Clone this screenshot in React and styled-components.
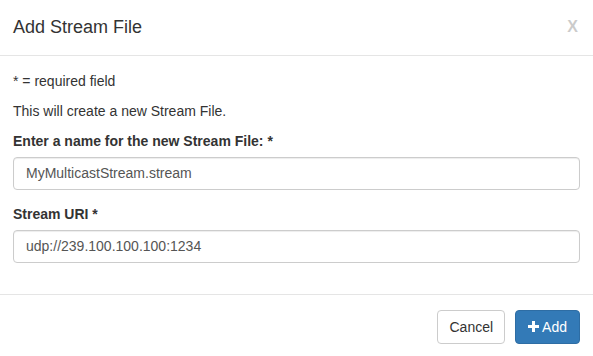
import styled, { createGlobalStyle } from 'styled-components';

const GlobalStyle = createGlobalStyle`
  html, body {
    margin: 0;
    background: #fff;
  }
  body {
    font-family: "Liberation Sans", Arial, sans-serif;
    font-size: 14px;
    line-height: 1.42857;
    color: #333;
  }
  * {
    box-sizing: border-box;
  }
`;

const Modal = styled.div`
  width: 593px;
  background: #fff;
`;

const Header = styled.div`
  display: flex;
  align-items: center;
  justify-content: space-between;
  padding: 15px 13px 14px;
  border-bottom: 1px solid #e5e5e5;
`;

const Title = styled.h4`
  margin: 0;
  font-size: 18px;
  font-weight: 400;
  line-height: 1.42857;
  color: #333;
`;

const Close = styled.button`
  border: 0;
  background: none;
  padding: 0;
  margin: 0 2px 2px 0;
  font-family: "Liberation Sans", Arial, sans-serif;
  font-size: 16px;
  font-weight: 700;
  line-height: 1;
  color: #000;
  opacity: 0.2;
  cursor: pointer;
`;

const Body = styled.div`
  padding: 16px 13px;
`;

const Text = styled.p`
  margin: 0 0 10px;
`;

const FormGroup = styled.div`
  margin-bottom: 15px;
`;

const Label = styled.label`
  display: block;
  margin-bottom: 5px;
  font-weight: 700;
`;

const Input = styled.input`
  display: block;
  width: 100%;
  height: 33px;
  padding: 6px 12px;
  font-family: inherit;
  font-size: 14px;
  color: #555;
  background: #fff;
  border: 1px solid #ccc;
  border-radius: 4px;
  box-shadow: inset 0 1px 1px rgba(0, 0, 0, 0.075);
`;

const Footer = styled.div`
  display: flex;
  justify-content: flex-end;
  gap: 10px;
  padding: 15px 13px;
  border-top: 1px solid #e5e5e5;
`;

const Button = styled.button`
  display: inline-flex;
  align-items: center;
  gap: 3px;
  height: 34px;
  padding: 6px ${(p) => (p.$primary ? '12px' : '11px')};
  font-family: inherit;
  font-size: 14px;
  border-radius: 4px;
  cursor: pointer;
  color: ${(p) => (p.$primary ? '#fff' : '#333')};
  background: ${(p) => (p.$primary ? '#337ab7' : '#fff')};
  border: 1px solid ${(p) => (p.$primary ? '#2e6da4' : '#ccc')};
`;

const PlusIcon = () => (
  <svg width="11" height="11" viewBox="0 0 11 11" aria-hidden="true">
    <path d="M4 0h3v4h4v3H7v4H4V7H0V4h4z" fill="currentColor" />
  </svg>
);

export default function App() {
  return (
    <>
      <GlobalStyle />
      <Modal>
        <Header>
          <Title>Add Stream File</Title>
          <Close aria-label="Close">X</Close>
        </Header>
        <Body>
          <Text>* = required field</Text>
          <Text>This will create a new Stream File.</Text>
          <FormGroup>
            <Label>Enter a name for the new Stream File: *</Label>
            <Input defaultValue="MyMulticastStream.stream" />
          </FormGroup>
          <FormGroup>
            <Label>Stream URI *</Label>
            <Input defaultValue="udp://239.100.100.100:1234" />
          </FormGroup>
        </Body>
        <Footer>
          <Button>Cancel</Button>
          <Button $primary>
            <PlusIcon />
            Add
          </Button>
        </Footer>
      </Modal>
    </>
  );
}
